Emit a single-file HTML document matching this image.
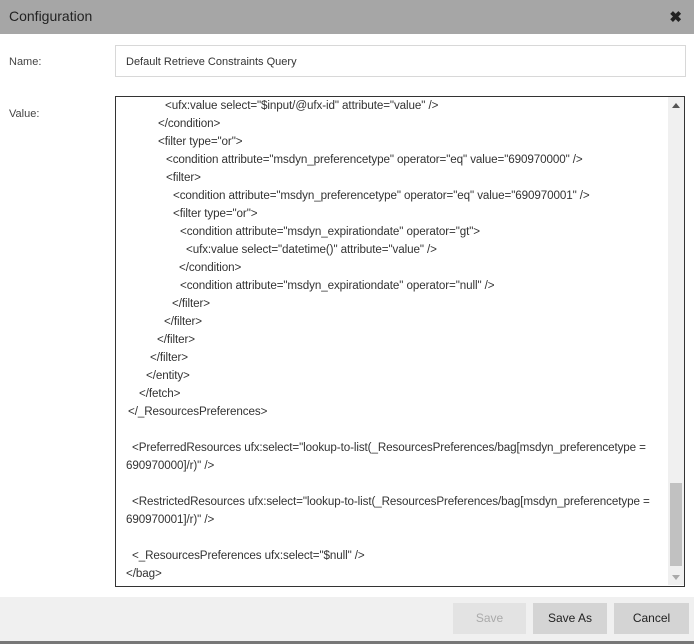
<!DOCTYPE html>
<html><head><style>
body{margin:0;width:694px;height:644px;background:#fff;font-family:"Liberation Sans",sans-serif;position:relative;overflow:hidden;color:#333}
.hdr{position:absolute;left:0;top:0;width:694px;height:34px;background:#a6a6a6}
.hdr span{position:absolute;left:9px;top:8px;font-size:14px;color:#222}
.x{position:absolute;right:12px;top:8px;font-size:15px;font-weight:bold;color:#222}
.lbl{position:absolute;left:9px;font-size:11px;color:#444}
.name{position:absolute;left:115px;top:45px;width:569px;height:30px;border:1px solid #d8d8d8}
.name span{position:absolute;left:10px;top:10px;font-size:11px;color:#333}
.ta{position:absolute;left:115px;top:96px;width:568px;height:489px;border:1px solid #333;overflow:hidden}
.l{position:absolute;font-size:11.65px;white-space:pre;color:#333;letter-spacing:-0.1px;margin-top:1px}
.sb{position:absolute;left:668px;top:97px;width:16px;height:488px;background:#f0f0f0}
.th{position:absolute;left:670px;top:483px;width:12px;height:83px;background:#c1c1c1}
.foot{position:absolute;left:0;top:597px;width:694px;height:44px;background:#f0f0f0;border-bottom:3px solid #777}
.b{position:absolute;top:603px;height:31px;background:#d4d4d4;font-size:12px;text-align:center;line-height:31px;color:#222}
</style></head><body>
<div class="hdr"><span>Configuration</span><div class="x">✖</div></div>
<div class="lbl" style="top:56px">Name:</div>
<div class="name"><span>Default Retrieve Constraints Query</span></div>
<div class="lbl" style="top:108px">Value:</div>
<div class="ta"></div>
<div class="sb"></div>
<div style="position:absolute;left:672px;top:103px;width:0;height:0;border-left:4px solid transparent;border-right:4px solid transparent;border-bottom:5px solid #555"></div>
<div style="position:absolute;left:672px;top:575px;width:0;height:0;border-left:4px solid transparent;border-right:4px solid transparent;border-top:5px solid #aaa"></div>
<div class="th"></div>
<div class="l" style="left:165px;top:98px">&lt;ufx:value select="$input/@ufx-id" attribute="value" /&gt;</div>
<div class="l" style="left:158px;top:116px">&lt;/condition&gt;</div>
<div class="l" style="left:158px;top:134px">&lt;filter type="or"&gt;</div>
<div class="l" style="left:166px;top:152px">&lt;condition attribute="msdyn_preferencetype" operator="eq" value="690970000" /&gt;</div>
<div class="l" style="left:166px;top:170px">&lt;filter&gt;</div>
<div class="l" style="left:173px;top:188px">&lt;condition attribute="msdyn_preferencetype" operator="eq" value="690970001" /&gt;</div>
<div class="l" style="left:173px;top:206px">&lt;filter type="or"&gt;</div>
<div class="l" style="left:180px;top:224px">&lt;condition attribute="msdyn_expirationdate" operator="gt"&gt;</div>
<div class="l" style="left:186px;top:242px">&lt;ufx:value select="datetime()" attribute="value" /&gt;</div>
<div class="l" style="left:179px;top:260px">&lt;/condition&gt;</div>
<div class="l" style="left:180px;top:278px">&lt;condition attribute="msdyn_expirationdate" operator="null" /&gt;</div>
<div class="l" style="left:172px;top:296px">&lt;/filter&gt;</div>
<div class="l" style="left:164px;top:314px">&lt;/filter&gt;</div>
<div class="l" style="left:157px;top:332px">&lt;/filter&gt;</div>
<div class="l" style="left:150px;top:350px">&lt;/filter&gt;</div>
<div class="l" style="left:146px;top:368px">&lt;/entity&gt;</div>
<div class="l" style="left:139px;top:386px">&lt;/fetch&gt;</div>
<div class="l" style="left:128px;top:404px">&lt;/_ResourcesPreferences&gt;</div>
<div class="l" style="left:132px;top:440px">&lt;PreferredResources ufx:select="lookup-to-list(_ResourcesPreferences/bag[msdyn_preferencetype =</div>
<div class="l" style="left:126px;top:458px">690970000]/r)" /&gt;</div>
<div class="l" style="left:132px;top:494px">&lt;RestrictedResources ufx:select="lookup-to-list(_ResourcesPreferences/bag[msdyn_preferencetype =</div>
<div class="l" style="left:126px;top:512px">690970001]/r)" /&gt;</div>
<div class="l" style="left:132px;top:548px">&lt;_ResourcesPreferences ufx:select="$null" /&gt;</div>
<div class="l" style="left:126px;top:566px">&lt;/bag&gt;</div>
<div class="foot"></div>
<div class="b" style="left:453px;width:73px;background:#e3e3e3;color:#aaa">Save</div>
<div class="b" style="left:533px;width:74px">Save As</div>
<div class="b" style="left:614px;width:75px">Cancel</div>
</body></html>
